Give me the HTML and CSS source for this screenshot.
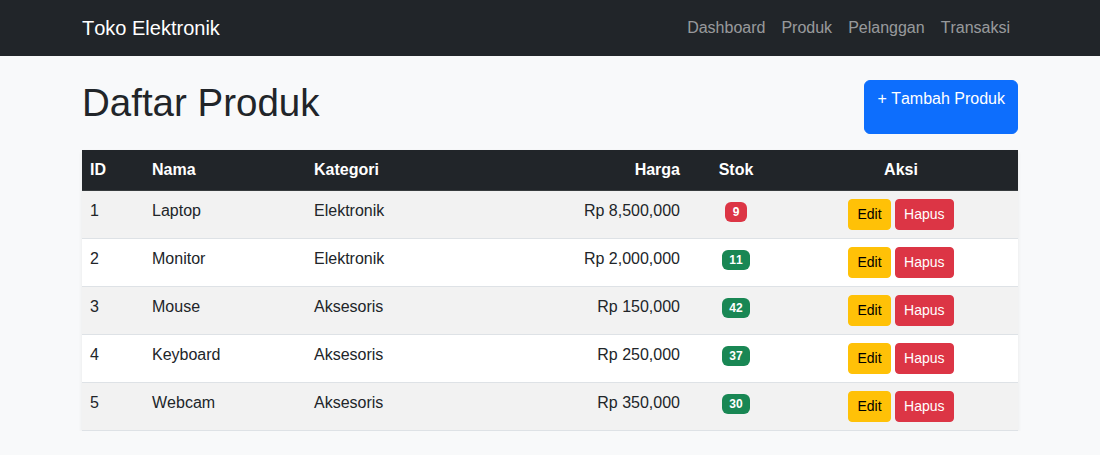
FILE: index.html
```html
<!DOCTYPE html>
<html lang="id">
<head>
<meta charset="utf-8">
<title>Daftar Produk</title>
<link rel="stylesheet" href="styles.css">
</head>
<body>
<nav class="navbar">
  <div class="container nav-inner">
    <a class="brand" href="#">Toko Elektronik</a>
    <ul class="nav-links">
      <li><a href="#">Dashboard</a></li>
      <li><a href="#">Produk</a></li>
      <li><a href="#">Pelanggan</a></li>
      <li><a href="#">Transaksi</a></li>
    </ul>
  </div>
</nav>
<main class="container main">
  <div class="page-head">
    <h1 class="title">Daftar Produk</h1>
    <a class="btn btn-primary" href="#">+ Tambah Produk</a>
  </div>
  <table class="table">
    <colgroup>
      <col class="c-id"><col class="c-nama"><col class="c-kat"><col class="c-harga"><col class="c-stok"><col class="c-aksi">
    </colgroup>
    <thead>
      <tr>
        <th>ID</th><th>Nama</th><th>Kategori</th><th class="right">Harga</th><th class="center">Stok</th><th class="center">Aksi</th>
      </tr>
    </thead>
    <tbody>
      <tr>
        <td>1</td><td>Laptop</td><td>Elektronik</td><td class="right">Rp 8,500,000</td>
        <td class="center"><span class="badge bg-danger">9</span></td>
        <td class="center"><a class="btn-sm btn-warning" href="#">Edit</a> <a class="btn-sm btn-danger" href="#">Hapus</a></td>
      </tr>
      <tr>
        <td>2</td><td>Monitor</td><td>Elektronik</td><td class="right">Rp 2,000,000</td>
        <td class="center"><span class="badge bg-success">11</span></td>
        <td class="center"><a class="btn-sm btn-warning" href="#">Edit</a> <a class="btn-sm btn-danger" href="#">Hapus</a></td>
      </tr>
      <tr>
        <td>3</td><td>Mouse</td><td>Aksesoris</td><td class="right">Rp 150,000</td>
        <td class="center"><span class="badge bg-success">42</span></td>
        <td class="center"><a class="btn-sm btn-warning" href="#">Edit</a> <a class="btn-sm btn-danger" href="#">Hapus</a></td>
      </tr>
      <tr>
        <td>4</td><td>Keyboard</td><td>Aksesoris</td><td class="right">Rp 250,000</td>
        <td class="center"><span class="badge bg-success">37</span></td>
        <td class="center"><a class="btn-sm btn-warning" href="#">Edit</a> <a class="btn-sm btn-danger" href="#">Hapus</a></td>
      </tr>
      <tr>
        <td>5</td><td>Webcam</td><td>Aksesoris</td><td class="right">Rp 350,000</td>
        <td class="center"><span class="badge bg-success">30</span></td>
        <td class="center"><a class="btn-sm btn-warning" href="#">Edit</a> <a class="btn-sm btn-danger" href="#">Hapus</a></td>
      </tr>
    </tbody>
  </table>
</main>
</body>
</html>
```
FILE: styles.css
```css
* { box-sizing: border-box; }
html, body { margin: 0; padding: 0; }
body {
  font-family: "Liberation Sans", Arial, sans-serif;
  font-size: 16px;
  line-height: 1.5;
  color: #212529;
  background: #f8f9fa;
  font-kerning: none;
}
a { text-decoration: none; }
.container {
  width: 960px;
  margin: 0 auto;
  padding: 0 12px;
}
.navbar {
  background: #212529;
  padding: 8px 0;
}
.nav-inner {
  display: flex;
  align-items: center;
  justify-content: space-between;
}
.brand {
  color: #fff;
  font-size: 20px;
  line-height: 30px;
  padding: 5px 0;
}
.nav-links {
  list-style: none;
  margin: 0;
  padding: 0;
  display: flex;
}
.nav-links a {
  display: block;
  padding: 8px;
  color: rgba(255, 255, 255, 0.55);
  line-height: 24px;
}
.main { margin-top: 24px; }
.page-head {
  display: flex;
  justify-content: space-between;
  margin-bottom: 16px;
}
.title {
  margin: 0 0 8px;
  font-size: 38.5px;
  font-weight: 500;
  line-height: 1.2;
}
.btn {
  display: inline-block;
  padding: 6px 12px;
  font-size: 16px;
  line-height: 24px;
  border: 1px solid transparent;
  border-radius: 6px;
}
.btn-primary { background: #0d6efd; border-color: #0d6efd; color: #fff; }
.table {
  width: 100%;
  border-collapse: collapse;
  background: #fff;
  box-shadow: 0 2px 4px rgba(0, 0, 0, 0.075);
  table-layout: fixed;
}
.c-id { width: 62px; }
.c-nama { width: 162px; }
.c-kat { width: 191px; }
.c-harga { width: 191px; }
.c-stok { width: 96px; }
.c-aksi { width: 234px; }
.table th, .table td {
  padding: 8px;
  text-align: left;
  vertical-align: top;
  border-bottom: 1px solid #dee2e6;
}
.table thead th {
  background: #212529;
  color: #fff;
  font-weight: 700;
  border-bottom-color: #373b3e;
}
.table tbody tr:nth-child(odd) td { background: #f2f2f2; }
.table .right { text-align: right; }
.table .center { text-align: center; }
.badge {
  display: inline-block;
  padding: 0.35em 0.65em;
  font-size: 12px;
  font-weight: 700;
  line-height: 1;
  color: #fff;
  border-radius: 6px;
  vertical-align: baseline;
}
.bg-danger { background: #dc3545; }
.bg-success { background: #198754; }
.btn-sm {
  display: inline-block;
  padding: 4px 8px;
  font-size: 14px;
  line-height: 21px;
  border: 1px solid transparent;
  border-radius: 4px;
}
.btn-warning { background: #ffc107; border-color: #ffc107; color: #000; }
.btn-danger { background: #dc3545; border-color: #dc3545; color: #fff; }
```
